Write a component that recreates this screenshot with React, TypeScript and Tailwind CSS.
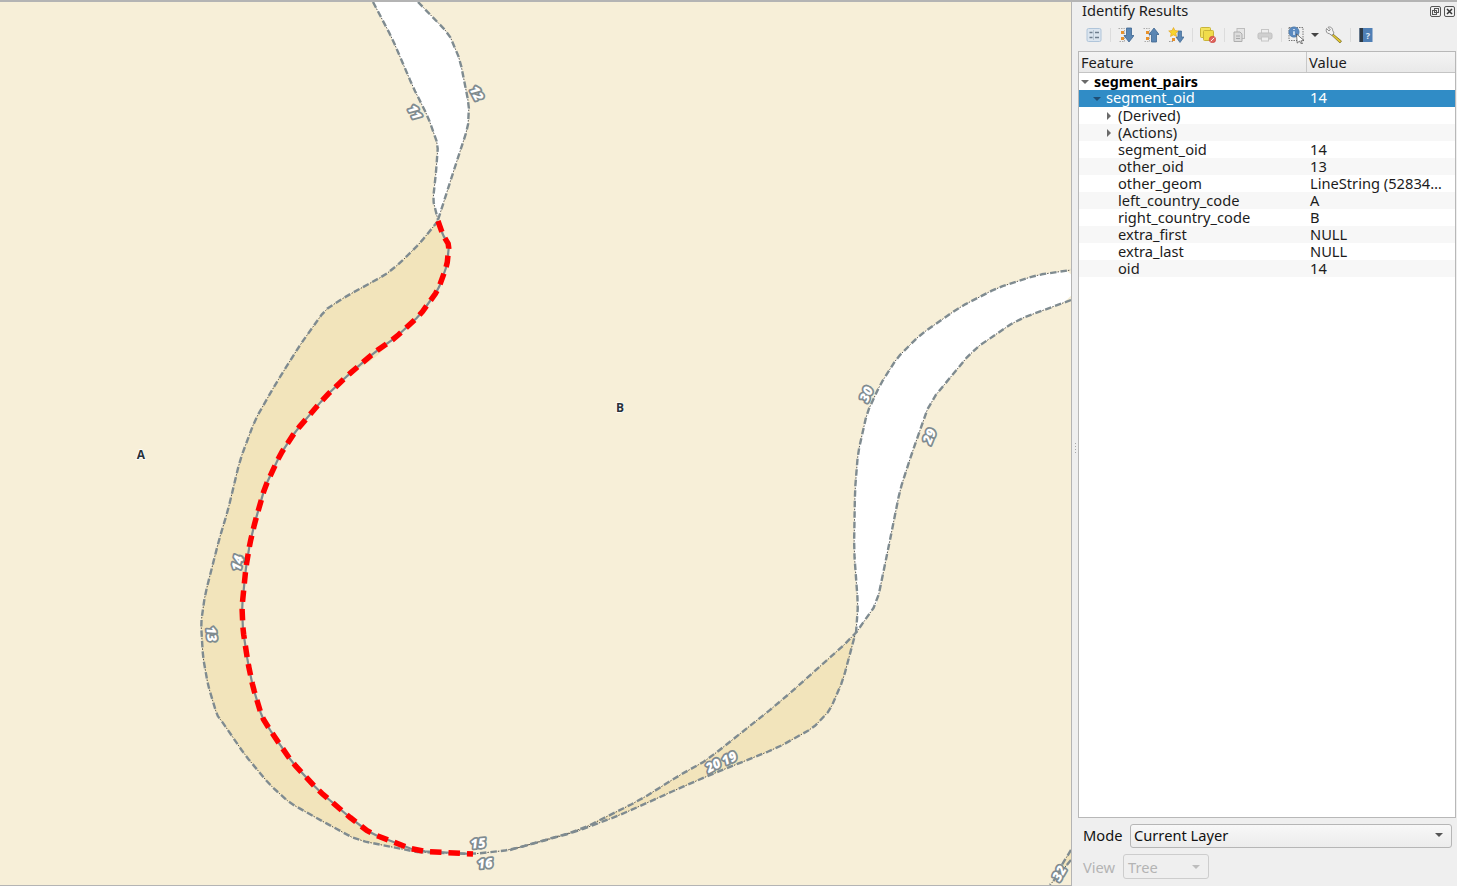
import React from "react";

const FONT = "font-['Noto_Sans','Open_Sans',sans-serif]";

function smooth(points: string): string {
  const p = points.split(" ").map((s) => s.split(",").map(Number));
  const out: number[][] = [p[0]];
  const k = 0.14;
  for (let i = 1; i < p.length - 1; i++) {
    const [ax, ay] = p[i - 1];
    const [bx, by] = p[i];
    const [cx, cy] = p[i + 1];
    out.push([bx + (ax - bx) * k, by + (ay - by) * k]);
    out.push([bx + (cx - bx) * k, by + (cy - by) * k]);
  }
  out.push(p[p.length - 1]);
  return out.map((q) => q.join(",")).join(" ");
}

const riverA = "373,2 392,38 413,87 428,117 438,145 436,172 433,200 438,220 453,173 468,127 469,105 460,60 449,34 418,2";
const riverB = "856,633 858,605 854,550 855,490 858,453 867,413 880,385 897,358 920,335 960,307 997,288 1037,275 1071,270 1071,300 1017,320 973,350 930,402 912,453 900,490 890,540 877,603";
const wedgeA = "438,221 420,243 400,263 385,275 345,297 325,310 300,345 275,385 255,420 240,460 228,510 219,540 205,595 201,623 203,657 208,685 217,715 223,723 245,755 270,785 290,803 322,821 357,840 417,852 370,833 347,815 318,790 292,762 272,733 262,717 253,687 248,663 243,630 242,607 246,567 250,543 255,522 265,487 280,455 295,432 325,397 347,376 375,358 395,338 420,315 438,290 447,265 449,245 443,235";
const wedgeB = "586,826 640,800 680,775 707,760 780,702 853,637 855,635 843,680 830,710 813,728 777,748 710,775 680,788 620,815";

const lines = [
  "373,2 392,38 413,87 428,117 438,145 436,172 433,200 438,220",
  "418,2 449,34 460,60 469,105 468,127 453,173 438,220",
  "438,221 420,243 400,263 385,275 345,297 325,310 300,345 275,385 255,420 240,460 228,510 219,540 205,595 201,623 203,657 208,685 217,715 223,723 245,755 270,785 290,803 322,821 357,840 417,852",
  "417,852 473,854 510,850 575,832 620,815 680,788 710,775 777,748 813,728 830,710 843,680 855,635",
  "510,850 580,830 640,800 680,775 707,760 780,702 853,637 877,603 890,540 900,490 912,453 930,402 973,350 1017,320 1071,300",
  "856,633 858,605 854,550 855,490 858,453 867,413 880,385 897,358 920,335 960,307 997,288 1037,275 1071,270",
  "1071,850 1063,863 1056,875",
  "1071,860 1050,885",
];
const red = "438,221 443,235 449,245 447,265 438,290 420,315 395,338 375,352 347,376 325,397 295,432 280,455 265,487 255,522 250,543 246,567 242,607 243,630 248,663 253,687 262,717 272,733 292,762 318,790 347,815 370,833 417,851 473,854";

const labels: [string, number, number, number][] = [
  ["11", 415, 112, 62],
  ["12", 477, 93, 62],
  ["14", 237, 563, -76],
  ["13", 212, 634, 84],
  ["15", 478, 843, -6],
  ["16", 485, 863, -6],
  ["20", 713, 765, -28],
  ["19", 729, 758, -26],
  ["30", 866, 394, -66],
  ["29", 929, 436, -68],
  ["32", 1059, 873, -60],
];

function MapCanvas() {
  return (
    <div className="w-[1072px] h-[884px] border-r border-b border-[#b4b4b4] bg-[#f7efd8] overflow-hidden">
      <svg viewBox="0 2 1071 883" className="block w-[1071px] h-[883px]">
        <polygon points="1071,850 1056,875 1050,885 1071,860" fill="#f2e4bb" />
        <polygon points={smooth(riverA)} fill="#ffffff" />
        <polygon points={smooth(riverB)} fill="#ffffff" />
        <polygon points={smooth(wedgeA)} fill="#f2e4bb" />
        <polygon points={smooth(wedgeB)} fill="#f2e4bb" />
        {lines.map((l, i) => {
          const p = smooth(l);
          return (
            <g key={i} fill="none" strokeLinejoin="round">
              <polyline points={p} stroke="#111111" strokeWidth="0.7" strokeDasharray="1.5 9" strokeDashoffset="-7.5" />
              <polyline points={p} stroke="#7f8b90" strokeWidth="2.4" strokeDasharray="6.5 4" />
            </g>
          );
        })}
        <polyline points={smooth(red)} fill="none" stroke="#7f8b90" strokeWidth="2.2" />
        <polyline points={smooth(red)} fill="none" stroke="#ff0000" strokeWidth="5.5" strokeDasharray="11.5 7" />
        {labels.map(([t, x, y, r]) => (
          <text
            key={t}
            x={x}
            y={y}
            transform={`rotate(${r} ${x} ${y})`}
            textAnchor="middle"
            dominantBaseline="central"
            className="font-['Open_Sans',sans-serif] text-[13px] font-extrabold italic"
            fill="#ffffff"
            stroke="#7f8b90"
            strokeWidth="3.6"
            paintOrder="stroke"
            strokeLinejoin="round"
          >
            {t}
          </text>
        ))}
        <text x="141" y="454" textAnchor="middle" dominantBaseline="central" className="font-['Open_Sans',sans-serif] text-[12px] font-bold" fill="#2a3238" stroke="#ffffff" strokeWidth="1.5" paintOrder="stroke">A</text>
        <text x="620" y="407" textAnchor="middle" dominantBaseline="central" className="font-['Open_Sans',sans-serif] text-[12px] font-bold" fill="#2a3238" stroke="#ffffff" strokeWidth="1.5" paintOrder="stroke">B</text>
      </svg>
    </div>
  );
}

function Sep({ ml }: { ml: string }) {
  return <div className={`w-px h-[14px] bg-[#dcdcdc] ${ml}`} />;
}

function TreeStrip() {
  return (
    <>
      <path d="M0.500 1.500h6v13h-6" stroke="#9a9a9a" strokeWidth="0.8" strokeDasharray="1.500 1" fill="none" />
      <rect x="3" y="4" width="3" height="3" fill="#e8912a" />
      <rect x="3" y="10" width="3" height="3" fill="#e8912a" />
    </>
  );
}

const IconExpandTree = () => (
  <svg viewBox="0 0 16 16" className="w-4 h-4 shrink-0">
    <rect x="1" y="1.500" width="14" height="13" rx="1.500" fill="#dbe5ef" stroke="#b0c5da" />
    <path d="M3.500 5.500h3M3.500 10.500h3M9 5.500h4M9 10.500h4" stroke="#6f7f8f" strokeWidth="1.300" />
    <path d="M7.500 3v10" stroke="#b8c6d3" />
  </svg>
);
const IconDown = () => (
  <svg viewBox="0 0 16 16" className="w-4 h-4 shrink-0">
    <TreeStrip />
    <path d="M8.500 1h5v7.500H16L11 15 6 8.500h2.500z" fill="#5b86b3" stroke="#3d6690" strokeWidth="0.8" />
  </svg>
);
const IconUp = () => (
  <svg viewBox="0 0 16 16" className="w-4 h-4 shrink-0">
    <TreeStrip />
    <path d="M8.500 15h5V7.500H16L11 1 6 7.500h2.500z" fill="#5b86b3" stroke="#3d6690" strokeWidth="0.8" />
  </svg>
);
const IconStar = () => (
  <svg viewBox="0 0 16 16" className="w-4 h-4 shrink-0">
    <path d="M1 14.500h5" stroke="#9a9a9a" strokeDasharray="1.500 1" />
    <rect x="4" y="11" width="3" height="3" fill="#e8912a" />
    <path d="M10 4h3.500v6H16l-4 5.500L8 10h2z" fill="#5b86b3" stroke="#3d6690" strokeWidth="0.7" />
    <path d="M5.500 0.500l1.500 3 3.300 0.400-2.400 2.300 0.600 3.300-3-1.600-3 1.600 0.600-3.300L0.700 3.900 4 3.500z" fill="#f6d32d" stroke="#e0a020" strokeWidth="0.6" />
  </svg>
);
const IconDeselect = () => (
  <svg viewBox="0 0 16 16" className="w-4 h-4 shrink-0">
    <rect x="0.500" y="0.500" width="10" height="10" rx="1" fill="#f3e35e" stroke="#c9b53a" />
    <rect x="3.500" y="3.500" width="10" height="10" rx="1" fill="#f0dc4a" stroke="#c9b53a" />
    <circle cx="12.500" cy="12.500" r="3.200" fill="#e0655f" stroke="#c23b36" strokeWidth="0.600" />
    <path d="M10.700 14.300l3.600-3.600" stroke="#ffffff" strokeWidth="0.900" />
  </svg>
);
const IconCopy = () => (
  <svg viewBox="0 0 16 16" className="w-4 h-4 shrink-0">
    <rect x="6" y="1.500" width="7.500" height="10" fill="#e6e6e6" stroke="#bdbdbd" />
    <path d="M3 5h6l2 2v7.500H3z" fill="#dcdcdc" stroke="#aeaeae" />
    <path d="M5 9h4M5 11.500h4" stroke="#a8a8a8" />
  </svg>
);
const IconPrint = () => (
  <svg viewBox="0 0 16 16" className="w-4 h-4 shrink-0">
    <rect x="4.500" y="2.500" width="7" height="4" fill="#eeeeee" stroke="#c6c6c6" />
    <rect x="1" y="6" width="14" height="6" rx="1.500" fill="#cfcfcf" stroke="#bfbfbf" />
    <rect x="4.500" y="10" width="7" height="4" fill="#eeeeee" stroke="#c6c6c6" />
  </svg>
);
const IconIdentify = () => (
  <svg viewBox="0 0 18 18" className="w-[18px] h-[18px] shrink-0 -ml-px">
    <rect x="1" y="1.500" width="14" height="13" fill="none" stroke="#7a7a7a" strokeDasharray="1.500 1" />
    <circle cx="6" cy="6" r="5.200" fill="#5b8ac0" stroke="#46729f" strokeWidth="0.500" />
    <path d="M6 3v1M6 5.200v3.800" stroke="#ffffff" strokeWidth="1.300" />
    <path d="M8.500 8l7.500 6.500-3.200 0.400 1.700 2.600-1.500 0.200-1.600-2.600-2.200 2z" fill="#ffffff" stroke="#444444" strokeWidth="0.700" />
  </svg>
);
const IconWrench = () => (
  <svg viewBox="0 0 18 18" className="w-[18px] h-[18px] shrink-0 -ml-px">
    <path d="M8 8l8.500 7-1.500 2L7 9.500z" fill="#e3c52f" stroke="#6f6420" strokeWidth="0.700" />
    <path d="M1.500 2.500L4 5l1.300-1.200L3 1.300C5 0.300 7.800 1.800 7.600 4.300L9 7 7 9.500 4.200 7.600C1.800 7.800 0.500 5 1.500 2.500z" fill="#f3f3f3" stroke="#777777" strokeWidth="0.800" />
  </svg>
);
const IconHelp = () => (
  <svg viewBox="0 0 16 16" className="w-4 h-4 shrink-0">
    <rect x="1.500" y="1" width="13" height="14" fill="#4f7fb5" />
    <rect x="1.500" y="1" width="3.500" height="14" fill="#2e3a46" />
    <text x="9.800" y="11.500" textAnchor="middle" fontSize="9" fontWeight="700" fill="#dfe9f3" className="font-['Noto_Sans',sans-serif]">?</text>
  </svg>
);

function Caret({ open, light }: { open?: boolean; light?: boolean }) {
  return (
    <svg viewBox="0 0 8 8" className="w-2 h-2 shrink-0">
      {open ? (
        <path d="M0 2h8L4 6z" fill={light ? "#1f4e75" : "#6a6a6a"} />
      ) : (
        <path d="M2 0v8l4-4z" fill="#6a6a6a" />
      )}
    </svg>
  );
}

type Row = { name: string; value?: string; caret?: "closed"; alt?: boolean };
const rows: Row[] = [
  { name: "(Derived)", caret: "closed" },
  { name: "(Actions)", caret: "closed", alt: true },
  { name: "segment_oid", value: "14" },
  { name: "other_oid", value: "13", alt: true },
  { name: "other_geom", value: "LineString (52834…" },
  { name: "left_country_code", value: "A", alt: true },
  { name: "right_country_code", value: "B" },
  { name: "extra_first", value: "NULL", alt: true },
  { name: "extra_last", value: "NULL" },
  { name: "oid", value: "14", alt: true },
];

function TreeBox() {
  return (
    <div className="ml-[6px] mr-px h-[767px] border border-[#b8b8b8] bg-white leading-[17px] text-[#1c1c1c]">
      <div className="flex h-[21px] bg-gradient-to-b from-[#f4f4f4] to-[#e9e9e9] border-b border-[#c4c4c4] leading-[21px]">
        <div className="w-[228px] pl-[2px] border-r border-[#c8c8c8]">Feature</div>
        <div className="pl-[2px]">Value</div>
      </div>
      <div className="flex h-[17px] items-center pl-[2px] font-bold text-black text-[14.3px]">
        <Caret open />
        <span className="ml-[5px] block leading-[17px]">segment_pairs</span>
      </div>
      <div className="flex h-[17px] items-center bg-[#308cc6] text-white">
        <div className="w-[228px] flex items-center pl-[14px]">
          <Caret open light />
          <span className="ml-[5px] block leading-[15px] pb-[2px]">segment_oid</span>
        </div>
        <div className="pl-[3px] leading-[15px] pb-[2px]">14</div>
      </div>
      {rows.map((r) => (
        <div key={r.name} className={`flex h-[17px] items-center ${r.alt ? "bg-[#f7f7f7]" : "bg-white"}`}>
          <div className="w-[228px] flex items-center pl-[26px]">
            <div className="w-[13px] shrink-0">{r.caret && <Caret />}</div>
            <span className="block leading-[17px]">{r.name}</span>
          </div>
          <div className="pl-[3px] whitespace-nowrap leading-[17px]">{r.value}</div>
        </div>
      ))}
    </div>
  );
}

function Panel() {
  return (
    <div className={`relative w-[385px] h-[884px] bg-[#efefef] ${FONT} text-[14.67px]`}>
      <div className="flex items-center h-[19px] pl-[10px] pr-[2px] text-[#1c1c1c]">
        <span className="flex-1 leading-[17px] pb-[2px]">Identify Results</span>
        <div className="flex gap-[3px]">
          <svg viewBox="0 0 11 11" className="w-[11px] h-[11px]">
            <rect x="0.500" y="0.500" width="10" height="10" rx="1.500" fill="none" stroke="#555555" />
            <rect x="4.500" y="2.500" width="4" height="4" fill="none" stroke="#555555" />
            <rect x="2.500" y="4.500" width="4" height="4" fill="none" stroke="#555555" />
          </svg>
          <svg viewBox="0 0 11 11" className="w-[11px] h-[11px]">
            <rect x="0.500" y="0.500" width="10" height="10" rx="1.500" fill="none" stroke="#555555" />
            <path d="M3 3l5 5M8 3l-5 5" stroke="#333333" strokeWidth="1.500" />
          </svg>
        </div>
      </div>
      <div className="flex items-center h-[30px] pb-[2px] pl-[14px]">
        <IconExpandTree />
        <Sep ml="ml-[8px]" />
        <div className="ml-[7px]"><IconDown /></div>
        <div className="ml-[9px]"><IconUp /></div>
        <div className="ml-[9px]"><IconStar /></div>
        <Sep ml="ml-[8px]" />
        <div className="ml-[7px]"><IconDeselect /></div>
        <Sep ml="ml-[8px]" />
        <div className="ml-[6px]"><IconCopy /></div>
        <div className="ml-[10px]"><IconPrint /></div>
        <Sep ml="ml-[8px]" />
        <div className="ml-[7px] w-4"><IconIdentify /></div>
        <svg viewBox="0 0 8 8" className="ml-[6px] w-2 h-2"><path d="M0 2h8L4 6z" fill="#444444" /></svg>
        <div className="ml-[7px] w-4"><IconWrench /></div>
        <Sep ml="ml-[8px]" />
        <div className="ml-[7px]"><IconHelp /></div>
      </div>
      <TreeBox />
      <div className="flex items-center h-[24px] mt-[6px] pl-[11px] text-[#111111]">
        <span className="w-[47px] pb-[2px]">Mode</span>
        <div className="w-[322px] h-[24px] flex items-center justify-between pl-[3px] pr-[8px] pb-[2px] rounded-[3px] border border-[#b6b6b6] bg-gradient-to-b from-[#f8f8f8] to-[#ececec]">
          <span>Current Layer</span>
          <svg viewBox="0 0 8 8" className="w-2 h-2"><path d="M0 2h8L4 6z" fill="#555555" /></svg>
        </div>
      </div>
      <div className="flex items-center h-[25px] mt-[6px] pl-[11px] text-[#b4b4b4]">
        <span className="w-[40px]">View</span>
        <div className="w-[86px] h-[25px] flex items-center justify-between pl-[4px] pr-[8px] rounded-[3px] border border-[#cdcdcd] bg-[#efefef]">
          <span>Tree</span>
          <svg viewBox="0 0 8 8" className="w-2 h-2"><path d="M0 2h8L4 6z" fill="#bdbdbd" /></svg>
        </div>
      </div>
      <div className="absolute left-[3px] top-[441px] flex flex-col gap-[2px]">
        <div className="w-px h-px bg-[#a8a8a8]" />
        <div className="w-px h-px bg-[#a8a8a8]" />
        <div className="w-px h-px bg-[#a8a8a8]" />
        <div className="w-px h-px bg-[#a8a8a8]" />
      </div>
    </div>
  );
}

export default function App() {
  return (
    <div className="w-[1457px] h-[886px] overflow-hidden border-t-2 border-[#b4b4b4] flex">
      <MapCanvas />
      <Panel />
    </div>
  );
}
